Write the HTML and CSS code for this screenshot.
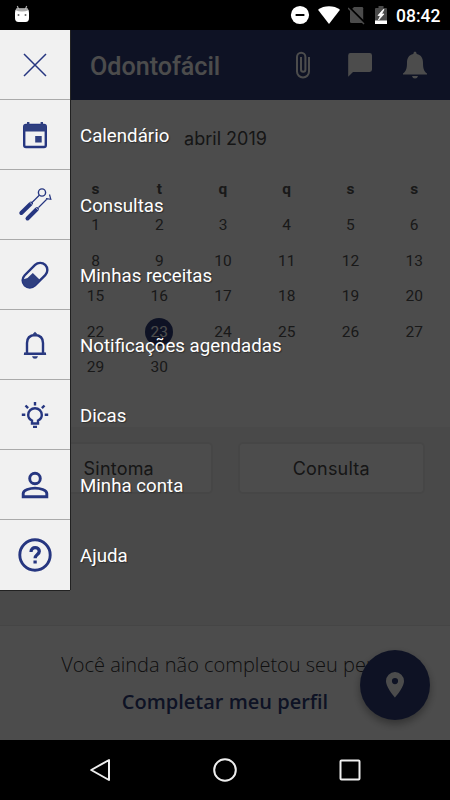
FILE: index.html
```
<!DOCTYPE html>
<html lang="pt-BR">
<head>
    <meta charset="UTF-8">
    <meta name="viewport" content="width=device-width, initial-scale=1.0">
    <title>Odontofácil</title>
    <link rel="stylesheet" href="styles.css">
</head>
<body>
    <div class="status-bar">
        <svg class="status-app" width="16" height="18" viewBox="0 0 16 18">
            <path d="M3.300 1l1.200 3M12.700 1l-1.200 3" stroke="#aaa" stroke-width="1.200"/>
            <path d="M2.500 3.500h11q1.500 1 1.500 4.500v5q0 4-3.500 4h-7Q1 17 1 13V8q0-3.500 1.500-4.500z" fill="#fff"/>
            <path d="M2.500 3.500h11l.8 1.700q-2.300 1.300-6.300 1.300T1.700 5.200z" fill="#aaa"/>
            <circle cx="4.500" cy="10" r="1" fill="#666"/>
            <circle cx="11.500" cy="10" r="1" fill="#666"/>
        </svg>
        <div class="status-icons">
            <svg width="20" height="20" viewBox="0 0 20 20">
                <circle cx="10" cy="10" r="9.100" fill="#fff"/>
                <path d="M5.600 10h8.800" stroke="#000" stroke-width="2"/>
            </svg>
            <svg width="22" height="20" viewBox="0 0 22 20">
                <path d="M0 4.700C6 .1 16 .1 22 4.700L11 19z" fill="#fff"/>
            </svg>
            <svg class="status-sim" width="18" height="20" viewBox="0 0 18 20">
                <path d="M6 2h8q1.200 0 1.200 1.200V18H3.500q-1.500 0-1.500-1.500V6z" fill="#4b4b4b"/>
                <path d="M.5 1.500L18 19" stroke="#000" stroke-width="2"/>
                <path d="M0 3l16 16" stroke="#4b4b4b" stroke-width="1.500"/>
            </svg>
            <svg class="status-battery" width="12" height="20" viewBox="0 0 12 20">
                <path d="M3.500 1h5v2H11q1 0 1 1v12H0V4q0-1 1-1h2.500z" fill="#4b4b4b"/>
                <path d="M0 15.500h12V19H0z" fill="#fff"/>
                <path d="M8.200 4.500L3 10.500h2.500L3.500 15 9 9H6.500L9 4.500z" fill="#fff" stroke="#fff" stroke-width=".8"/>
            </svg>
            <span class="clock">08:42</span>
        </div>
    </div>

    <div class="screen">
        <header class="header">
            <h1>Odontofácil</h1>
            <div class="header-icons">
                <svg width="16" height="30" viewBox="0 0 16 30" fill="none" stroke="#fff" stroke-width="2">
                    <path d="M14 7v14.500a6 6 0 0 1-12 0V7a4.200 4.200 0 0 1 8.400 0v12.500a2.200 2.200 0 0 1-4.400 0V7"/>
                </svg>
                <svg width="24" height="24" viewBox="0 0 24 24" fill="#fff">
                    <path d="M2.400 0h19.200Q24 0 24 2.400v14.200q0 2.400-2.400 2.400H5L.2 23.800V2.400Q.2 0 2.400 0z"/>
                </svg>
                <svg width="24" height="28" viewBox="0 0 24 28" fill="#fff">
                    <path d="M12 .5q1.500 0 1.700 2.500C18.500 4 20 7.500 20 12c0 6 1 8 4 10.600v.9H0v-.9C3 20 4 18 4 12c0-4.500 1.500-8 6.300-9Q10.500.5 12 .5zM9 25h6q-.6 2.500-3 2.500T9 25z"/>
                </svg>
            </div>
        </header>

        <section class="calendar">
            <h2>abril 2019</h2>
            <div class="days weekdays">
                <span>d</span><span>s</span><span>t</span><span>q</span><span>q</span><span>s</span><span>s</span>
            </div>
            <div class="days">
                <span></span><span>1</span><span>2</span><span>3</span><span>4</span><span>5</span><span>6</span>
                <span>7</span><span>8</span><span>9</span><span>10</span><span>11</span><span>12</span><span>13</span>
                <span>14</span><span>15</span><span>16</span><span>17</span><span>18</span><span>19</span><span>20</span>
                <span>21</span><span>22</span><span class="today">23</span><span>24</span><span>25</span><span>26</span><span>27</span>
                <span>28</span><span>29</span><span>30</span>
            </div>
        </section>

        <section class="actions">
            <button class="action">Sintoma</button>
            <button class="action">Consulta</button>
        </section>

        <section class="profile">
            <p>Você ainda não completou seu perfil</p>
            <a class="profile-link">Completar meu perfil</a>
        </section>

        <div class="fab">
            <svg width="18" height="26" viewBox="0 0 18 26">
                <path fill="#fff" fill-rule="evenodd" d="M9 0a9 9 0 0 1 9 9c0 6.500-9 16.500-9 16.500S0 15.500 0 9a9 9 0 0 1 9-9zm0 6a3.100 3.100 0 1 0 0 6.200A3.100 3.100 0 0 0 9 6z"/>
            </svg>
        </div>

        <div class="overlay"></div>

        <nav class="menu">
            <div class="menu-item">
                <div class="menu-icon">
                    <svg width="40" height="40" viewBox="0 0 40 40"><path d="M9 9l22 22M31 9L9 31" stroke-width="1.500"/></svg>
                </div>
            </div>
            <div class="menu-item">
                <div class="menu-icon">
                    <svg width="40" height="40" viewBox="0 0 40 40">
                        <rect x="9.200" y="10" width="21.600" height="22" rx="1.800"/>
                        <path class="solid" d="M9 10h22v6.500H9zM12 7h2.400v3H12zM25.600 7H28v3h-2.400zM20.200 21h6.500v6.500h-6.500z"/>
                    </svg>
                </div>
                <span>Calendário</span>
            </div>
            <div class="menu-item">
                <div class="menu-icon">
                    <svg width="40" height="40" viewBox="0 0 40 40">
                        <circle cx="27" cy="7.500" r="3.600" stroke-width="1.400"/>
                        <path d="M24.300 10.300L17 17.500M23.500 22.500L32.500 13.500M31 13.500l4.800 .8-1.300-4.800" stroke-width="1.200"/>
                        <path d="M16 18.500L6.300 28M22 24L12.500 33.500" stroke-width="4" stroke-linecap="round"/>
                        <path class="cut" d="M14.800 17.200l2.600 2.600M20.800 22.600l2.600 2.600"/>
                    </svg>
                </div>
                <span>Consultas</span>
            </div>
            <div class="menu-item">
                <div class="menu-icon">
                    <svg width="40" height="40" viewBox="0 0 40 40">
                        <rect x="5.500" y="13" width="29" height="14.400" rx="7.200" transform="rotate(-45 20 20.200)"/>
                        <path class="solid" d="M8 24.500l4.500-1.500 5.300-5 7.200 7-5.500 5.500c-3 2.500-7 2.500-9.500.2-1.700-1.700-2.300-4-2-6.200z"/>
                    </svg>
                </div>
                <span>Minhas receitas</span>
            </div>
            <div class="menu-item">
                <div class="menu-icon">
                    <svg width="40" height="40" viewBox="0 0 40 40">
                        <path d="M9 28.800h22M12 28V18q0-7.500 8-8 8 .5 8 8v10"/>
                        <path class="solid" d="M20 6.800l2 2-.2 2h-3.600l-.2-2zM8.500 29.800l4-4v4zM31.500 29.800l-4-4v4zM17 31.300h6q-.6 2.500-3 2.500t-3-2.500z"/>
                    </svg>
                </div>
                <span>Notificações agendadas</span>
            </div>
            <div class="menu-item">
                <div class="menu-icon">
                    <svg width="40" height="40" viewBox="0 0 40 40">
                        <path d="M17 28.500v-3c-2.200-1-3.800-3.100-3.800-5.500a6.800 6.800 0 0 1 13.600 0c0 2.400-1.600 4.500-3.800 5.500v3z"/>
                        <path d="M18 31.900h4M20 7v3.500M6.800 19.800h3.500M29.700 19.800h3.500M10.500 10.500l2.600 2.600M29.500 10.500l-2.600 2.600"/>
                    </svg>
                </div>
                <span>Dicas</span>
            </div>
            <div class="menu-item">
                <div class="menu-icon">
                    <svg width="40" height="40" viewBox="0 0 40 40" class="thick">
                        <circle cx="20" cy="13.500" r="5.300"/>
                        <path d="M8.200 31.700v-3.200c0-3.400 6.700-5.400 11.800-5.400s11.800 2 11.800 5.400v3.200z"/>
                    </svg>
                </div>
                <span>Minha conta</span>
            </div>
            <div class="menu-item">
                <div class="menu-icon">
                    <svg width="40" height="40" viewBox="0 0 40 40" class="thick">
                        <circle cx="20" cy="20" r="15.200"/>
                        <path d="M16 17c0-6 8.300-5.200 8.300-.7 0 3.200-4.200 3.200-4.200 7M20.100 25.500v3" stroke-width="3.300"/>
                    </svg>
                </div>
                <span>Ajuda</span>
            </div>
        </nav>
    </div>

    <div class="nav-bar">
        <svg width="24" height="24" viewBox="0 0 24 24"><path d="M3.200 12L21 2v20z"/></svg>
        <svg width="24" height="24" viewBox="0 0 24 24"><circle cx="12" cy="12" r="10.800"/></svg>
        <svg width="24" height="24" viewBox="0 0 24 24"><rect x="2.500" y="2.500" width="19" height="19" rx="1"/></svg>
    </div>
</body>
</html>
```
FILE: styles.css
```
* {
    box-sizing: border-box;
}

body {
    margin: 0;
    width: 450px;
    height: 800px;
    overflow: hidden;
    background: #000;
    font-family: Roboto, sans-serif;
}

svg {
    display: block;
    flex: none;
}

.status-bar {
    display: flex;
    justify-content: space-between;
    align-items: center;
    height: 30px;
    padding: 0 9px 0 14px;
}

.status-app {
    margin-bottom: 3px;
}

.status-icons {
    display: flex;
    align-items: center;
}

.status-icons svg + svg {
    margin-left: 8px;
}

.status-icons .status-battery {
    margin-left: 9px;
}

.clock {
    width: 45px;
    margin-left: 9px;
    color: #fff;
    font-size: 17.5px;
    font-weight: 500;
    line-height: 30px;
    padding-top: 1px;
}

.screen {
    position: relative;
    height: 710px;
    background: #fff;
}

.header {
    display: flex;
    justify-content: space-between;
    align-items: center;
    height: 70px;
    padding: 0 23px 0 90px;
    background: #2f3f7b;
}

h1 {
    margin: 2px 0 0;
    color: #fff;
    font-size: 25.1px;
    font-weight: 500;
}

.header-icons {
    display: flex;
    align-items: center;
    gap: 31px;
}

.header-icons svg:nth-child(2) {
    margin-left: 6px;
}

.calendar {
    height: 327px;
    padding: 0 4px 0 0;
}

h2 {
    margin: 0;
    padding: 27px 0 0 5px;
    color: #4a4a4a;
    font-family: Inter, sans-serif;
    font-size: 18px;
    font-weight: 400;
    line-height: 24px;
    text-align: center;
}

.days {
    display: grid;
    grid-template-columns: repeat(7, 1fr);
    grid-auto-rows: 35.5px;
    align-items: center;
    justify-items: center;
    color: #555;
    font-size: 15.5px;
}

.weekdays {
    margin-top: 20px;
    margin-bottom: 1px;
    font-weight: 700;
}

.today {
    width: 28px;
    height: 28px;
    border-radius: 50%;
    background: #2f3f7b;
    color: #fff;
    line-height: 28px;
    text-align: center;
}

.actions {
    display: flex;
    gap: 25px;
    height: 199px;
    padding: 15px 25px;
    background: #f3f3f3;
    border-bottom: 1px solid #e8e8e8;
}

.action {
    flex: 1;
    height: 52px;
    padding: 0;
    border: 2px solid #ebebeb;
    border-radius: 5px;
    background: #fff;
    color: #4a4a4a;
    font-family: Inter, sans-serif;
    font-size: 18px;
    letter-spacing: 0.2px;
}

.profile {
    padding-top: 25px;
    font-family: "Open Sans", sans-serif;
    font-size: 20px;
    line-height: 28px;
    text-align: center;
    white-space: nowrap;
}

.profile p {
    margin: 0 0 9px;
    color: #333;
    font-weight: 300;
}

.profile-link {
    color: #2f3f7b;
    font-weight: 600;
}

.fab {
    position: absolute;
    right: 20px;
    bottom: 20px;
    display: flex;
    align-items: center;
    justify-content: center;
    width: 70px;
    height: 70px;
    border-radius: 50%;
    background: #2f3f7b;
    box-shadow: 0 4px 9px rgba(0, 0, 0, 0.35);
}

.overlay {
    position: absolute;
    inset: 0;
    background: rgba(0, 0, 0, 0.7);
}

.menu {
    position: absolute;
    top: 0;
    left: 0;
}

.menu-item {
    display: flex;
    align-items: center;
    height: 70px;
    color: #fff;
    font-size: 18.7px;
    white-space: nowrap;
    text-shadow: 1px 1px 1px rgba(0, 0, 0, 0.4);
}

.menu-item span {
    margin: 2px 0 0 10px;
}

.menu-icon {
    display: flex;
    align-items: center;
    justify-content: center;
    width: 70px;
    height: 70px;
    background: #f1f1f1;
    box-shadow: inset 0 -1px #aaa, 1px 0 #222;
}

.menu-item:last-child .menu-icon {
    box-shadow: 1px 0 #222, 0 1px #222;
}

.menu-icon svg {
    fill: none;
    stroke: #263680;
    stroke-width: 2.4;
}

.menu-icon .thick {
    stroke-width: 2.9;
}

.menu-icon .solid {
    fill: #2f3f80;
    stroke: none;
}

.menu-icon .cut {
    stroke: #f1f1f1;
    stroke-width: 0.7;
}

.nav-bar {
    display: flex;
    justify-content: space-between;
    align-items: center;
    height: 60px;
    padding: 0 88px;
}

.nav-bar svg {
    fill: none;
    stroke: #eee;
    stroke-width: 2;
    stroke-linejoin: round;
}
```
